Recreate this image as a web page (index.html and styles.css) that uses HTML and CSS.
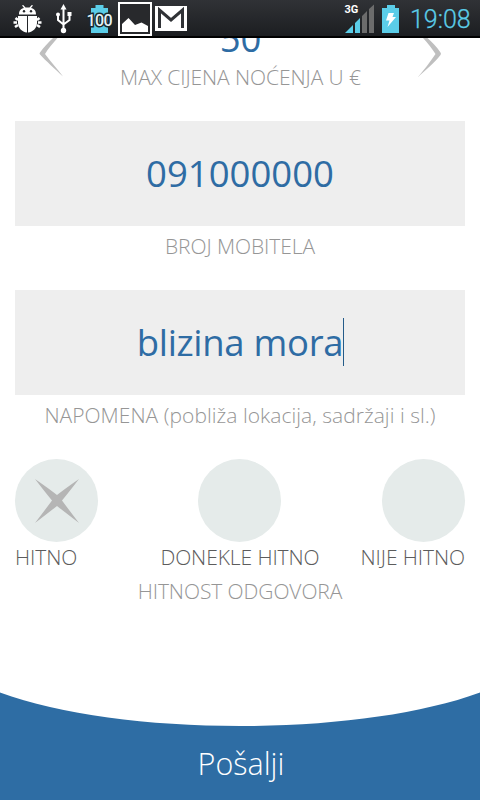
FILE: index.html
```html
<!DOCTYPE html>
<html lang="hr">
<head>
<meta charset="utf-8">
<title>Upit</title>
<link rel="stylesheet" href="styles.css">
</head>
<body>
<div class="screen">
  <header class="status">
    <svg class="status-icons" width="200" height="38" viewBox="0 0 200 38">
      <g fill="#fff">
        <path d="M19 14.500C19 10.500 21 8.500 24 8L22 5.500L23.200 5L25.500 7.500H29.500L31.800 5L33 5.500L31 8C34 8.500 36 10.500 36 14.500Z"/>
        <path d="M18 16H27V32.500C22 32 18 28 18 23ZM28 16H37V23C37 28 33 32 28 32.500Z"/>
        <path d="M18 20L15.500 18M17 22.500H13.500M18 25L15 27M37 20L39.500 18M38 22.500H41.500M37 25L40 27" fill="none" stroke="#fff" stroke-width="2.600"/>
        <circle cx="24" cy="11.300" r="1.200" fill="#242629"/><circle cx="31" cy="11.300" r="1.200" fill="#242629"/>
        <path d="M63.500 4L66.500 9.500H60.500Z"/>
        <circle cx="63.500" cy="30.500" r="2.700"/><circle cx="58" cy="14.500" r="2"/><rect x="67.500" y="12" width="4" height="4"/>
        <path d="M63.500 7V30M58 15V20L63.500 24.500M69.500 15V20L63.500 24.500" fill="none" stroke="#fff" stroke-width="2"/>
      </g>
      <path d="M95.500 5H103.500V8H108V33H91V8H95.500Z" fill="#5bcde8"/>
      <text class="charge" x="99.200" y="26" text-anchor="middle">100</text>
      <rect x="119" y="3" width="32" height="32" fill="#28292c" stroke="#fff" stroke-width="2"/>
      <path d="M122 24L128.500 18L135 25L141.500 22.500L148 26V32H122Z" fill="#fff"/>
      <rect x="155" y="6" width="32" height="25" fill="#fff"/>
      <path d="M159.500 28V10L171 20L182.500 10V28" fill="none" stroke="#303236" stroke-width="3"/>
    </svg>
    <div class="status-right">
      <svg width="66" height="38" viewBox="340 0 66 38">
        <text class="net" x="344.500" y="13">3G</text>
        <path d="M345 33L353 25V33ZM355 33V23L360 18V33Z" fill="#5bcde8"/>
        <path d="M362 33V16L367 11V33ZM369 33V9L374 4.500V33Z" fill="#6c6c6c"/>
        <path d="M387 5H395V8H399V33H382V8H387Z" fill="#5bcde8"/>
        <path d="M388.500 13H394L392.500 17H396L387.500 27L389.500 20.500H386Z" fill="#fff"/>
      </svg>
      <span class="clock">19:08</span>
    </div>
  </header>

  <main class="form">
    <section class="stepper">
      <svg class="arrow" width="26" height="39" viewBox="38 38 26 39"><path d="M53 38H57.500C53 43 48 49 45 54C51 62 58 70 63 76.500C55 69 46 61 40 54.500Q39 53.500 40 52.500C44 47 48 43 53 38Z" fill="#bfbfbf"/></svg>
      <span class="value price">50</span>
      <svg class="arrow" width="26" height="39" viewBox="418 38 26 39"><path d="M424 38H428.500C433 42 438 47 441.500 52.500Q442.500 53.500 441.500 55C436 62 427 70 419 77C425 70 431 62 436.500 54C433 49 429 43 424 38Z" fill="#bfbfbf"/></svg>
    </section>
    <div class="label l-price">MAX CIJENA NOĆENJA U €</div>
    <div class="field"><span class="value">091000000</span></div>
    <div class="label l-phone">BROJ MOBITELA</div>
    <div class="field"><span class="value note">blizina mora<i class="caret"></i></span></div>
    <div class="label l-note">NAPOMENA (pobliža lokacija, sadržaji i sl.)</div>
    <div class="options">
      <div class="option first">
        <span class="circle"><svg width="44" height="44" viewBox="0 0 44 44"><path d="M0 0Q13 9 22 16Q31 9 44 0Q34 13 27 21.500Q34 31 44 44Q31 34 22 27Q13 34 0 44Q10 31 17 21.500Q10 13 0 0Z" fill="#b5b5b5"/></svg></span>
        <span class="option-name">HITNO</span>
      </div>
      <div class="option middle"><span class="circle"></span><span class="option-name">DONEKLE HITNO</span></div>
      <div class="option last"><span class="circle"></span><span class="option-name">NIJE HITNO</span></div>
    </div>
    <div class="label l-urgency">HITNOST ODGOVORA</div>
  </main>

  <footer class="submit">
    <svg class="curve" width="480" height="34" viewBox="0 0 480 34"><path d="M0 0H480V.5C420 22.500 332 34 240 34C148 34 60 22.500 0 .5Z" fill="#fff"/></svg>
    <span class="submit-text">Pošalji</span>
  </footer>
</div>
</body>
</html>
```
FILE: styles.css
```css
* { box-sizing: border-box; }
body { margin: 0; background: #fff; font-family: "Open Sans", sans-serif; }
.screen { width: 480px; height: 800px; display: flex; flex-direction: column; overflow: hidden; }
.status { height: 38px; flex: none; display: flex; justify-content: space-between; background: linear-gradient(#303236, #1c1e21 95%, #000 96%); }
.status svg { display: block; }
.status-right { display: flex; width: 140px; }
.charge { font: 500 16px Roboto, sans-serif; fill: #e6f1f5; stroke: #17282e; stroke-width: 3px; paint-order: stroke; letter-spacing: -.7px; }
.net { font: 700 11px Roboto, sans-serif; fill: #fff; }
.clock { font: 300 25px/40px Roboto, sans-serif; color: #5bcde8; margin-left: 4px; white-space: nowrap; -webkit-text-stroke: .25px #5bcde8; }
.form { flex: 1; padding: 0 15px; display: flex; flex-direction: column; }
.stepper { height: 39px; flex: none; display: flex; justify-content: space-between; padding: 0 22px 0 23px; overflow: hidden; }
.arrow { flex: none; }
.value { font-size: 36.5px; line-height: 50px; color: #2e6ca4; white-space: nowrap; }
.price { margin-top: -25px; }
.label { flex: none; text-align: center; font-weight: 300; font-size: 21px; line-height: 30px; color: #969696; white-space: nowrap; letter-spacing: -.08px; }
.l-price { margin-top: -15px; height: 59px; padding-left: 1px; }
.field { height: 105px; flex: none; background: #eee; display: flex; align-items: center; justify-content: center; padding-bottom: 2px; }
.l-phone, .l-note { height: 64px; padding-top: 5px; }
.l-note { letter-spacing: .04px; }
.note { position: relative; letter-spacing: -.3px; }
.caret { position: absolute; right: -1px; top: 1px; width: 1px; height: 48px; background: #245b89; }
.options { display: grid; grid-template-columns: 1fr auto 1fr; height: 117px; flex: none; }
.option { display: flex; flex-direction: column; align-items: center; }
.first { align-items: flex-start; }
.last { align-items: flex-end; }
.circle { width: 83px; height: 83px; border-radius: 50%; background: #e5ebea; display: flex; align-items: center; justify-content: center; }
.middle .circle { margin-right: 1px; }
.option-name { font-weight: 300; font-size: 21px; line-height: 30px; color: #5c5c5c; white-space: nowrap; letter-spacing: -.08px; }
.submit { height: 108px; flex: none; background: #2e6da4; text-align: center; }
.curve { display: block; }
.submit-text { display: block; color: #fff; font-weight: 300; font-size: 30.5px; line-height: 40px; margin-top: 17px; padding-left: 2px; }
```
